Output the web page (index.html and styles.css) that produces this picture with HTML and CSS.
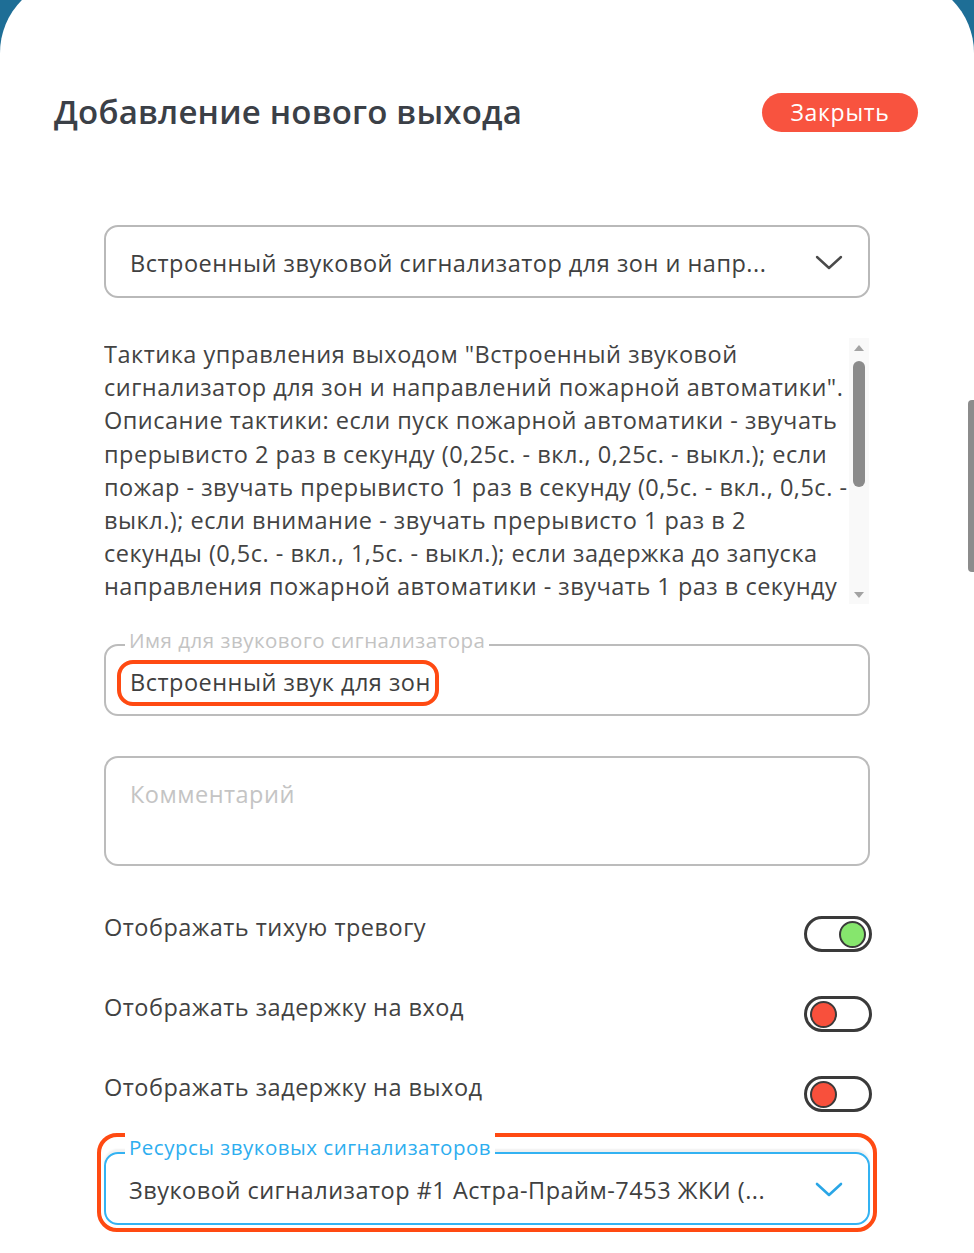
FILE: index.html
```html
<!DOCTYPE html>
<html lang="ru">
<head>
<meta charset="utf-8">
<title>Добавление нового выхода</title>
<link rel="stylesheet" href="styles.css">
</head>
<body>
<div class="card">
  <header class="header">
    <h1 class="title">Добавление нового выхода</h1>
    <button class="close-btn" type="button">Закрыть</button>
  </header>

  <div class="form">
    <div class="select">
      <span class="select-text">Встроенный звуковой сигнализатор для зон и напр...</span>
      <svg class="chevron" width="28" height="16" viewBox="0 0 28 16"><polyline points="2,2 14,13 26,2" fill="none" stroke="#4a4a4a" stroke-width="2.4" stroke-linecap="round" stroke-linejoin="round"/></svg>
    </div>

    <div class="desc">
      <p class="desc-text">Тактика управления выходом "Встроенный звуковой сигнализатор для зон и направлений пожарной автоматики". Описание тактики: если пуск пожарной автоматики - звучать прерывисто 2 раз в секунду (0,25с. - вкл., 0,25с. - выкл.); если пожар - звучать прерывисто 1 раз в секунду (0,5с. - вкл., 0,5с. - выкл.); если внимание - звучать прерывисто 1 раз в 2 секунды (0,5с. - вкл., 1,5с. - выкл.); если задержка до запуска направления пожарной автоматики - звучать 1 раз в секунду (0,5с. - вкл., 0,5с. - выкл.); иначе - не звучать.</p>
      <div class="scrollbar">
        <span class="arrow-up"></span>
        <div class="track"><span class="thumb"></span></div>
        <span class="arrow-down"></span>
      </div>
    </div>

    <div class="field name-field">
      <span class="field-label">Имя для звукового сигнализатора</span>
      <span class="mark">Встроенный звук для зон</span>
    </div>

    <textarea class="comment" placeholder="Комментарий"></textarea>

    <div class="toggles">
      <div class="toggle-row">
        <span class="toggle-label">Отображать тихую тревогу</span>
        <span class="toggle on"><span class="knob"></span></span>
      </div>
      <div class="toggle-row">
        <span class="toggle-label">Отображать задержку на вход</span>
        <span class="toggle off"><span class="knob"></span></span>
      </div>
      <div class="toggle-row">
        <span class="toggle-label">Отображать задержку на выход</span>
        <span class="toggle off"><span class="knob"></span></span>
      </div>
    </div>

    <div class="annot">
      <div class="field res-field">
        <span class="field-label blue">Ресурсы звуковых сигнализаторов</span>
        <span class="select-text">Звуковой сигнализатор #1 Астра-Прайм-7453 ЖКИ (...</span>
        <svg class="chevron" width="28" height="16" viewBox="0 0 28 16"><polyline points="2,2 14,13 26,2" fill="none" stroke="#2aa6e6" stroke-width="2.6" stroke-linecap="round" stroke-linejoin="round"/></svg>
      </div>
    </div>
  </div>
</div>
<div class="page-scroll"></div>
</body>
</html>
```

FILE: styles.css
```css
* { box-sizing: border-box; }

html, body {
  margin: 0;
  padding: 0;
}

body {
  background: #1e6e96;
  font-family: "Open Sans", "Liberation Sans", sans-serif;
  color: #414141;
  overflow: hidden;
  height: 1253px;
  position: relative;
}

.card {
  background: #fff;
  margin-top: -22px;
  border-radius: 75px 75px 0 0;
  height: 1275px;
}

.header {
  display: flex;
  justify-content: space-between;
  align-items: center;
  padding: 113px 56px 0 54px;
}

.title {
  margin: 0;
  font-size: 33px;
  font-weight: 600;
  color: #3b4047;
  letter-spacing: 0.2px;
  line-height: 40px;
}

.close-btn {
  background: #f8533f;
  border: none;
  border-radius: 20px;
  color: #fff;
  font-family: "Open Sans", sans-serif;
  font-size: 23px;
  letter-spacing: 0.7px;
  height: 39px;
  width: 156px;
  padding: 0;
  line-height: 39px;
  margin-top: 2px;
}

.form {
  margin-left: 104px;
  width: 766px;
  padding-top: 93px;
  font-size: 23.5px;
  letter-spacing: 0.5px;
}

.select {
  height: 73px;
  border: 2px solid #b9b9b9;
  border-radius: 14px;
  display: flex;
  align-items: center;
  justify-content: space-between;
  padding: 2px 25px 0 24px;
}

.select-text {
  color: #404040;
  white-space: nowrap;
}

.chevron { display: block; }

.desc {
  margin-top: 40px;
  height: 266px;
  display: flex;
  overflow: hidden;
}

.desc-text {
  margin: 0;
  width: 745px;
  line-height: 33.2px;
  padding-top: 0;
  color: #434343;
}

.scrollbar {
  width: 20px;
  flex: none;
  background: #f9f9f9;
  display: flex;
  flex-direction: column;
  align-items: center;
  padding: 7px 0 6px;
}

.arrow-up, .arrow-down {
  width: 0;
  height: 0;
  border-left: 5px solid transparent;
  border-right: 5px solid transparent;
}
.arrow-up { border-bottom: 6px solid #a3a3a3; }
.arrow-down { border-top: 6px solid #a3a3a3; }

.track {
  flex: 1;
  width: 100%;
  display: flex;
  justify-content: center;
  padding-top: 10px;
}

.thumb {
  width: 12px;
  height: 126px;
  border-radius: 6px;
  background: #8b8b8b;
}

.field {
  position: relative;
  border: 2px solid #bcbcbc;
  border-radius: 14px;
}

.field-label {
  position: absolute;
  top: -20px;
  left: 19px;
  background: #fff;
  padding: 0 4px 0 4px;
  font-size: 20.5px;
  letter-spacing: 0.5px;
  line-height: 28px;
  color: #c3c3c3;
  white-space: nowrap;
}

.field-label.blue { color: #2eaeef; }

.name-field {
  margin-top: 40px;
  height: 72px;
  padding: 14px 0 0 11px;
}

.mark {
  display: inline-block;
  border: 4px solid #ff4a12;
  border-radius: 16px;
  padding: 0 4px 0 9px;
  height: 46px;
  line-height: 37px;
  color: #3f3f3f;
}

.comment {
  display: block;
  margin-top: 40px;
  width: 100%;
  height: 110px;
  border: 2px solid #bcbcbc;
  border-radius: 14px;
  resize: none;
  font-family: "Open Sans", sans-serif;
  font-size: 23.5px;
  letter-spacing: 0.5px;
  line-height: 33px;
  padding: 20px 24px;
  color: #404040;
  outline: none;
}

.comment::placeholder { color: #c4c4c4; }

.toggles {
  margin-top: 50px;
  display: flex;
  flex-direction: column;
  gap: 44px;
}

.toggle-row {
  display: flex;
  justify-content: space-between;
  align-items: flex-start;
  height: 36px;
}

.toggle-label {
  line-height: 33px;
  margin-top: -5px;
  color: #424242;
}

.toggle {
  width: 68px;
  height: 36px;
  border: 3px solid #3a3a3a;
  border-radius: 18px;
  display: flex;
  align-items: center;
  padding: 0 3px;
  margin-right: -2px;
}

.toggle.on { justify-content: flex-end; }

.knob {
  width: 27px;
  height: 27px;
  border-radius: 50%;
  border: 2px solid #3a3a3a;
}

.toggle.on .knob { background: #86e66d; }
.toggle.off .knob { background: #f8503c; }

.annot {
  margin: 21px 0 0 -7px;
  width: 780px;
  border: 4px solid #ff4a12;
  border-radius: 20px;
  padding: 15px 3px 3px 3px;
}

.res-field {
  height: 73px;
  border-color: #33b2f2;
  display: flex;
  align-items: center;
  justify-content: space-between;
  padding: 2px 25px 0 23px;
  box-shadow: 0 -3px 2px rgba(0, 0, 0, 0.06);
}

.res-field .field-label { top: -21px; }

.page-scroll {
  position: absolute;
  right: 0;
  top: 400px;
  width: 6px;
  height: 172px;
  background: #8c8c8c;
  border-radius: 4px 0 0 4px;
}
```
